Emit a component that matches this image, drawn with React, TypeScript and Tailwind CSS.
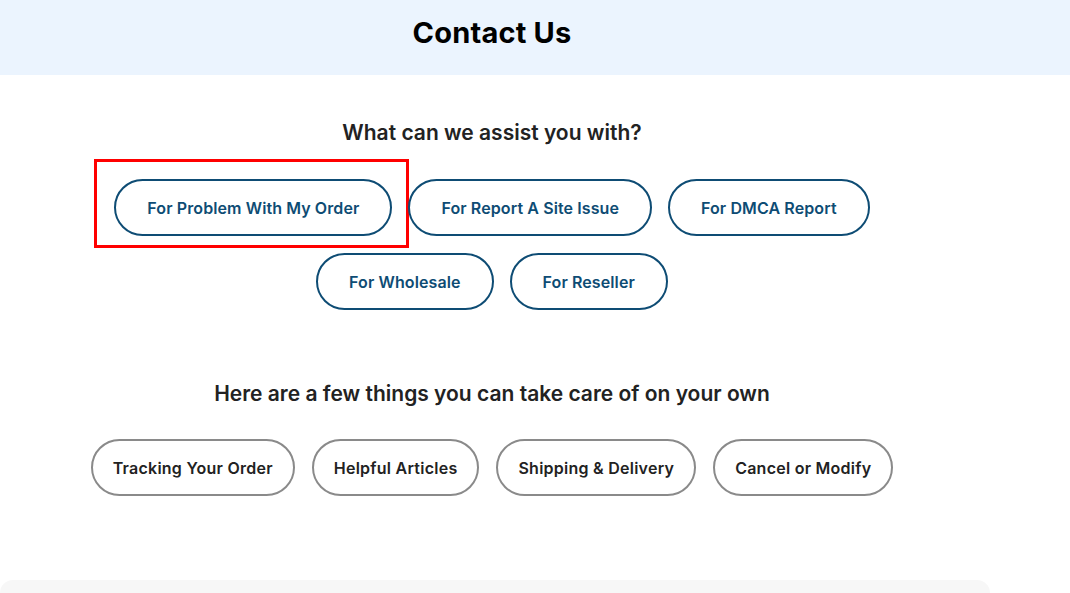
import React from 'react'

const font = { fontFamily: 'Inter, "Open Sans", "Liberation Sans", sans-serif' }

const helpTopics = [
  ['For Problem With My Order', 'For Report A Site Issue', 'For DMCA Report'],
  ['For Wholesale', 'For Reseller'],
]

const selfServe = ['Tracking Your Order', 'Helpful Articles', 'Shipping & Delivery', 'Cancel or Modify']

function TopicButton({ label, marked }: { label: string, marked?: boolean }) {
  return (
    <div className="relative">
      {marked && (
        <div className="absolute -left-[20px] -top-[20px] -right-[17px] -bottom-[12px] border-[3px] border-[#ff0000] pointer-events-none" />
      )}
      <button className="h-[57px] px-[31px] rounded-full border-2 border-[#0e4c74] bg-white text-[16px] tracking-[0.1px] font-semibold text-[#0e4c74]">
        {label}
      </button>
    </div>
  )
}

export default function App() {
  return (
    <div className="h-screen bg-white overflow-hidden" style={font}>
      <header className="h-[75px] bg-[#ebf4fe]">
        <div className="w-[984px] h-full flex items-center justify-center pb-[9px]">
          <h1 className="text-[29px] tracking-[0.2px] font-bold text-black">Contact Us</h1>
        </div>
      </header>

      <main className="w-[984px] flex flex-col items-center">
        <h2 className="mt-[44px] text-[21px] leading-[28px] font-semibold text-[#222]">What can we assist you with?</h2>

        <div className="mt-[32px] flex flex-col items-center gap-[17px]">
          {helpTopics.map((row, i) => (
            <div key={i} className="flex gap-[16px]">
              {row.map((label) => (
                <TopicButton key={label} label={label} marked={label === 'For Problem With My Order'} />
              ))}
            </div>
          ))}
        </div>

        <h2 className="mt-[70px] text-[21px] leading-[28px] font-semibold text-[#222]">
          Here are a few things you can take care of on your own
        </h2>

        <div className="mt-[31px] flex gap-[17px]">
          {selfServe.map((label) => (
            <button
              key={label}
              className="h-[57px] px-[20px] rounded-full border-2 border-[#8a8a8a] bg-white text-[16px] tracking-[0.25px] font-semibold text-[#222]"
            >
              {label}
            </button>
          ))}
        </div>

        <div className="mt-[84px] w-[990px] h-[13px] rounded-t-2xl bg-[#f7f7f7] self-start" />
      </main>
    </div>
  )
}
